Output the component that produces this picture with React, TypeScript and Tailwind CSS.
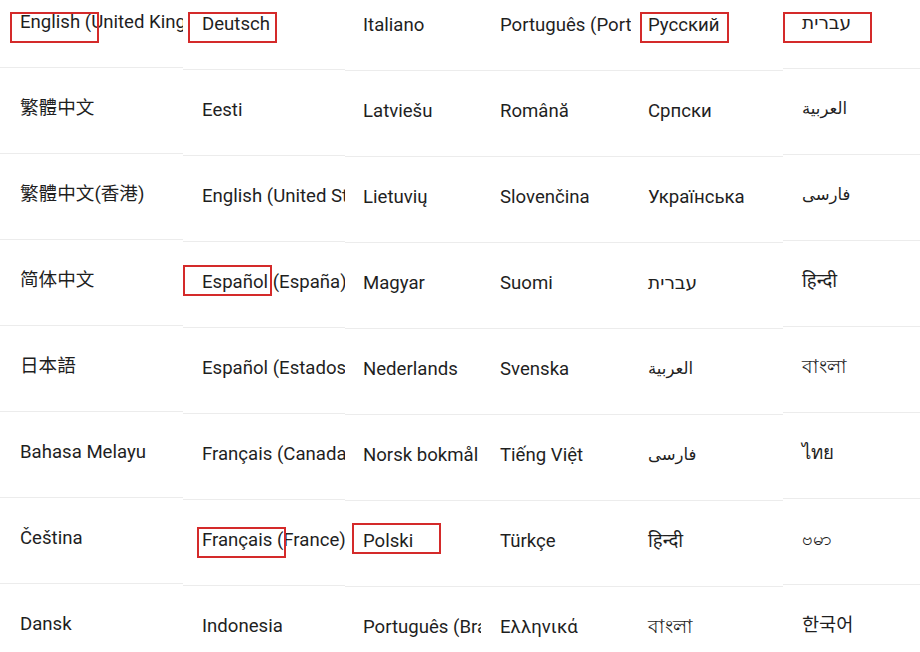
const columns = [
  {
    width: "w-[183px]",
    offset: "mt-[-18px]",
    pad: "pl-[20px]",
    items: ["English (United Kingdom)", "繁體中文", "繁體中文(香港)", "简体中文", "日本語", "Bahasa Melayu", "Čeština", "Dansk"],
  },
  {
    width: "w-[162px]",
    offset: "mt-[-16px]",
    pad: "pl-[19px]",
    items: ["Deutsch", "Eesti", "English (United States)", "Español (España)", "Español (Estados Unidos)", "Français (Canada)", "Français (France)", "Indonesia"],
  },
  {
    width: "w-[136px]",
    offset: "mt-[-15px]",
    pad: "pl-[18px]",
    items: ["Italiano", "Latviešu", "Lietuvių", "Magyar", "Nederlands", "Norsk bokmål", "Polski", "Português (Brasil)"],
  },
  {
    width: "w-[150px]",
    offset: "mt-[-15px]",
    pad: "pl-[19px]",
    items: ["Português (Portugal)", "Română", "Slovenčina", "Suomi", "Svenska", "Tiếng Việt", "Türkçe", "Ελληνικά"],
  },
  {
    width: "w-[152px]",
    offset: "mt-[-15px]",
    pad: "pl-[17px]",
    items: ["Русский", "Српски", "Українська", "עברית", "العربية", "فارسی", "हिन्दी", "বাংলা"],
  },
  {
    width: "w-[137px]",
    offset: "mt-[-17px]",
    pad: "pl-[19px]",
    items: ["עברית", "العربية", "فارسی", "हिन्दी", "বাংলা", "ไทย", "ဗမာ", "한국어"],
  },
];

// arabic script runs a little smaller in the shot
const small = ["العربية", "فارسی"];

// red annotation boxes drawn over the strips
const marks = [
  "left-[10px] top-[12px]",
  "left-[188px] top-[12px]",
  "left-[640px] top-[12px]",
  "left-[783px] top-[12px]",
  "left-[183px] top-[265px]",
  "left-[197px] top-[527px]",
  "left-[352px] top-[523px]",
];

export default function App() {
  return (
    <div
      className="relative w-[920px] h-[652px] overflow-hidden bg-white text-[18.6px] text-[#1f1f1f]"
      style={{ fontFamily: 'Roboto, "Noto Sans", "Noto Sans CJK SC", "DejaVu Sans", sans-serif' }}
    >
      <div className="flex">
        {columns.map((col, i) => (
          <div key={i} className={`${col.width} ${col.offset} shrink-0 overflow-hidden`}>
            {col.items.map((label) => (
              <div
                key={label}
                className={`h-[86px] ${col.pad} flex items-center pb-1 border-b border-[#ececec] whitespace-nowrap`}
              >
                <span dir="auto" className={small.includes(label) ? "text-[16.5px]" : ""}>
                  {label}
                </span>
              </div>
            ))}
          </div>
        ))}
      </div>

      {marks.map((pos) => (
        <div key={pos} className={`absolute ${pos} w-[89px] h-[31px] border-2 border-[#d42a2a]`} />
      ))}
    </div>
  );
}
